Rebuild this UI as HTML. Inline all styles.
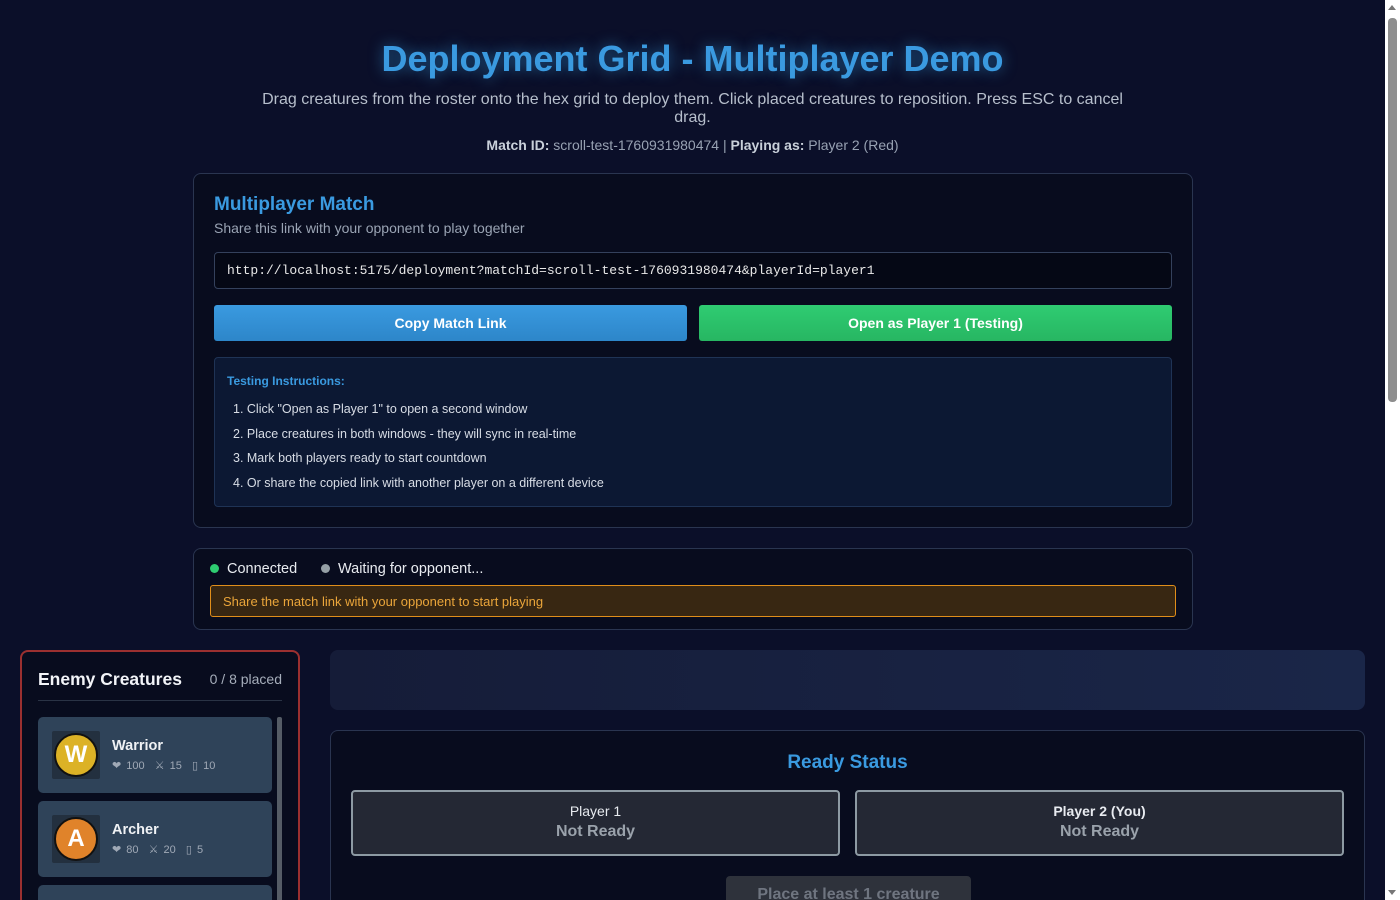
<!DOCTYPE html>
<html style="overflow:hidden;height:900px"><head><meta charset="utf-8"><style>
*{box-sizing:border-box;margin:0;padding:0}
body{width:1400px;height:900px;overflow:hidden;background:#0b0f29;font-family:"Liberation Sans","DejaVu Sans",sans-serif;color:#e6e9ef}
#w{position:relative;width:1400px;height:900px;overflow:hidden;background:#0b0f29}
.sb{position:absolute;right:0;top:0;width:15px;height:900px;background:#fff}
.sb .th{position:absolute;left:3px;top:18px;width:9px;height:384px;background:#8e8e8e;border-radius:4px}
.sb .up{position:absolute;left:3px;top:5px;border:4px solid transparent;border-bottom:5px solid #777;border-top:0}
.sb .dn{position:absolute;left:3px;bottom:5px;border:4px solid transparent;border-top:5px solid #777;border-bottom:0}
h1{position:absolute;top:38px;left:0;width:1385px;text-align:center;font-size:36px;font-weight:bold;color:#3a9ae0;text-shadow:0 0 14px rgba(52,152,219,.6)}
.sub{position:absolute;top:91px;left:250px;width:885px;text-align:center;font-size:16px;line-height:18px;color:#b7bfcc}
.mid{position:absolute;top:137px;left:0;width:1385px;text-align:center;font-size:14px;color:#98a2b3}
.mid b{color:#c9d0da}
.card{position:absolute;left:193px;width:1000px;background:#080c1e;border:1px solid #2a3550;border-radius:8px}
.c1{top:173px;height:355px}
.c1 h2{position:absolute;left:20px;top:20px;font-size:19px;color:#3a9ae0}
.c1 .d{position:absolute;left:20px;top:46px;font-size:14px;color:#9aa4b4}
.url{position:absolute;left:20px;top:78px;width:958px;height:37px;border:1px solid #34415c;border-radius:4px;background:#050815;font-family:"Liberation Mono",monospace;font-size:13px;color:#e8e8e8;padding:10px 12px}
.btn{position:absolute;top:131px;width:473px;height:36px;border-radius:3px;font-size:14px;font-weight:bold;color:#fff;text-align:center;line-height:36px}
.b1{left:20px;background:linear-gradient(#3a9ae0,#2d86c9)}
.b2{left:505px;background:linear-gradient(#2fcc72,#27b662)}
.ins{position:absolute;left:20px;top:183px;width:958px;height:150px;background:#0c1833;border:1px solid #1f3355;border-radius:4px}
.ins h3{position:absolute;left:12px;top:16px;font-size:12px;color:#3a9ae0}
.ins ol{position:absolute;left:18px;top:44px;font-size:12.5px;color:#d8dde6;list-style:none}
.ins li{height:24.6px}
.c2{top:548px;height:82px}
.st{position:absolute;top:12px;font-size:14.5px;color:#e8ebf0}
.dot{display:inline-block;width:9px;height:9px;border-radius:50%;margin-right:8px}
.warn{position:absolute;left:16px;top:36px;width:966px;height:32px;border:1px solid #e08e1a;border-radius:3px;background:#382712;color:#eaa53a;font-size:13px;padding:8px 12px}
.left{position:absolute;left:20px;top:650px;width:280px;height:250px;overflow:hidden;background:#080c1e;border:2px solid #9b3030;border-bottom:none;border-radius:8px 8px 0 0}
.left h4{position:absolute;left:16px;top:17px;font-size:17.5px;color:#f2f4f8}
.left .cnt{position:absolute;right:16px;top:19px;font-size:14px;color:#a6aebb}
.left .hr{position:absolute;left:16px;right:16px;top:48px;border-top:1px solid #2a3345}
.cr{position:absolute;left:16px;width:234px;height:76px;background:#2f4359;border-radius:5px}
.av{position:absolute;left:14px;top:14px;width:48px;height:48px;background:#23303f;border-radius:2px}
.av span{position:absolute;left:2px;top:2px;width:44px;height:44px;border-radius:50%;border:2px solid #111;color:#fff;font-size:24px;font-weight:bold;text-align:center;line-height:40px}
.cn{position:absolute;left:74px;top:21px;font-size:14.5px;font-weight:bold;color:#f0f2f5}
.cs{position:absolute;left:74px;top:42px;font-size:11px;color:#a0a9b6;word-spacing:2px}
.scr{position:absolute;left:255px;top:65px;width:5px;height:185px;background:#555c66;border-radius:2px 2px 0 0}
.top2{position:absolute;left:330px;top:650px;width:1035px;height:60px;border-radius:8px;background:linear-gradient(90deg,#151c38,#1a2648)}
.rs{position:absolute;left:330px;top:730px;width:1035px;height:170px;overflow:hidden;background:#080c1e;border:1px solid #2a3550;border-bottom:none;border-radius:8px 8px 0 0}
.rs h2{position:absolute;top:21px;width:100%;text-align:center;font-size:19px;color:#3a9ae0}
.pb{position:absolute;top:59px;width:489px;height:66px;background:#242834;border:2px solid #8d9aa3;border-radius:4px;text-align:center}
.pb .a{margin-top:11px;font-size:14px;color:#e8ebf0}
.pb .b{margin-top:4px;font-size:16px;font-weight:bold;color:#9aa2ab}
.pl{position:absolute;left:395px;top:145px;width:245px;height:40px;background:#2e323b;border-radius:4px;text-align:center;font-size:16px;font-weight:bold;color:#6f7580;padding-top:10px}
</style></head><body><div id="w">
<h1>Deployment Grid - Multiplayer Demo</h1>
<div class="sub">Drag creatures from the roster onto the hex grid to deploy them. Click placed creatures to reposition. Press ESC to cancel drag.</div>
<div class="mid"><b>Match ID:</b> scroll-test-1760931980474 | <b>Playing as:</b> Player 2 (Red)</div>
<div class="card c1">
<h2>Multiplayer Match</h2>
<div class="d">Share this link with your opponent to play together</div>
<div class="url">http://localhost:5175/deployment?matchId=scroll-test-1760931980474&amp;playerId=player1</div>
<div class="btn b1">Copy Match Link</div>
<div class="btn b2">Open as Player 1 (Testing)</div>
<div class="ins"><h3>Testing Instructions:</h3>
<ol><li>1. Click "Open as Player 1" to open a second window</li><li>2. Place creatures in both windows - they will sync in real-time</li><li>3. Mark both players ready to start countdown</li><li>4. Or share the copied link with another player on a different device</li></ol></div>
</div>
<div class="card c2">
<div class="st" style="left:16px"><span class="dot" style="background:#2ecc71"></span>Connected</div>
<div class="st" style="left:127px"><span class="dot" style="background:#95a0a6"></span>Waiting for opponent...</div>
<div class="warn">Share the match link with your opponent to start playing</div>
</div>
<div class="left">
<h4>Enemy Creatures</h4><div class="cnt">0 / 8 placed</div><div class="hr"></div>
<div class="cr" style="top:65px"><div class="av"><span style="background:#dcb226">W</span></div><div class="cn">Warrior</div><div class="cs">❤ 100 &nbsp;⚔ 15 &nbsp;▯ 10</div></div>
<div class="cr" style="top:149px"><div class="av"><span style="background:#e0832a">A</span></div><div class="cn">Archer</div><div class="cs">❤ 80 &nbsp;⚔ 20 &nbsp;▯ 5</div></div>
<div class="cr" style="top:233px"></div>
<div class="scr"></div>
</div>
<div class="top2"></div>
<div class="rs"><h2>Ready Status</h2>
<div class="pb" style="left:20px"><div class="a">Player 1</div><div class="b">Not Ready</div></div>
<div class="pb" style="left:524px"><div class="a" style="font-weight:bold">Player 2 (You)</div><div class="b">Not Ready</div></div>
<div class="pl">Place at least 1 creature</div>
</div>
<div class="sb"><div class="up"></div><div class="th"></div><div class="dn"></div></div>
</div></body></html>
